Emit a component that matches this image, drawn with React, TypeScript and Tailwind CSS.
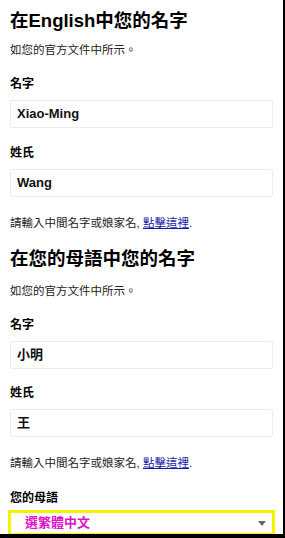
const font = { fontFamily: '"Liberation Sans", "Noto Sans CJK TC", sans-serif' }

function Field({ label, value, top }: { label: string; value: string; top: string }) {
  return (
    <div className={top}>
      <div className="text-[12px] leading-[16px] font-bold text-black">{label}</div>
      <div className="mt-[8px] h-[28px] border border-[#ececec] rounded-[2px] flex items-center px-[6px] text-[13px] font-semibold text-[#111]">
        {value}
      </div>
    </div>
  )
}

function Help({ top }: { top: string }) {
  return (
    <p className={`${top} text-[11.5px] leading-[16px] text-[#222]`}>
      請輸入中間名字或娘家名,{' '}
      <a href="#" className="text-[#1a1aa6] underline">點擊這裡</a>.
    </p>
  )
}

export default function App() {
  return (
    <div className="w-[285px] h-[538px] bg-black" style={font}>
      <div className="w-[283px] h-[534px] bg-white overflow-hidden px-[10px] pt-[9px]">
        {/* English name */}
        <h2 className="text-[18.5px] leading-[24px] font-bold text-black">在English中您的名字</h2>
        <p className="mt-[9px] text-[11.5px] leading-[16px] text-[#222]">如您的官方文件中所示。</p>
        <Field label="名字" value="Xiao-Ming" top="mt-[18px]" />
        <Field label="姓氏" value="Wang" top="mt-[17px]" />
        <Help top="mt-[18px]" />

        {/* Native name */}
        <h2 className="mt-[16px] text-[18.5px] leading-[24px] font-bold text-black">在您的母語中您的名字</h2>
        <p className="mt-[12px] text-[11.5px] leading-[16px] text-[#222]">如您的官方文件中所示。</p>
        <Field label="名字" value="小明" top="mt-[18px]" />
        <Field label="姓氏" value="王" top="mt-[16px]" />
        <Help top="mt-[18px]" />

        <div className="mt-[19px] text-[12px] leading-[16px] font-bold text-black">您的母語</div>
        <div className="mt-[4px] -mx-[2px] h-[26px] border-[3px] border-[#f5f200] bg-white flex items-center justify-between pl-[14px] pr-[6px]">
          <span className="text-[13px] font-semibold text-[#e010c8]">選繁體中文</span>
          <svg width="8" height="5" viewBox="0 0 8 5"><path d="M0 0h8L4 5z" fill="#666" /></svg>
        </div>
      </div>
    </div>
  )
}
